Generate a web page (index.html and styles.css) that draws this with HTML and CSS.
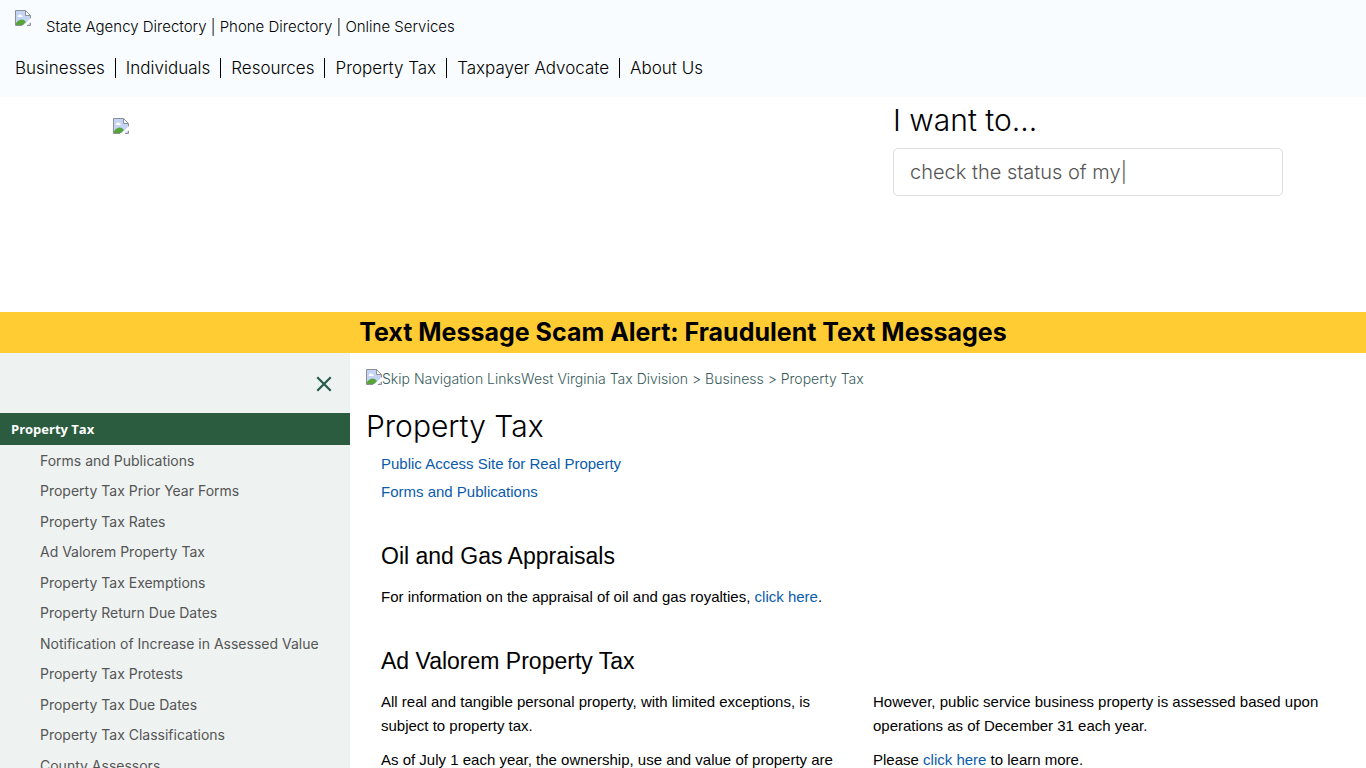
FILE: index.html
```html
<!DOCTYPE html>
<html lang="en">
<head>
<meta charset="utf-8">
<meta name="viewport" content="width=device-width, initial-scale=1">
<title>Property Tax</title>
<link rel="stylesheet" href="styles.css">
</head>
<body>
<svg class="sprite" aria-hidden="true">
  <symbol id="missing" viewBox="0 0 16 16">
    <path d="M.5.5h10l5 5v10H.5z" fill="#c3d4f5"/>
    <path d="M3 6c0-2 3-2 3-.8C8 4.700 8.500 7 7 7H3.500C2.500 7 2.300 6.200 3 6z" fill="#fff"/>
    <path d="M1 15v-2c3-4 7-5 10-1l-3 3z" fill="#57a43c"/>
    <path d="M10.500.5v5h5z" fill="#fff"/>
    <path d="M15.500 9v-3.500l-5-5H.5v15H7M10.500.5v5h5M12 15.500h3.500V13" fill="none" stroke="#8d9095"/>
    <path d="M7.500 16L16 8v3.500L11 16z" fill="#fff"/>
  </symbol>
</svg>
<header class="site-header">
  <div class="agency">
    <svg class="missing" role="img" aria-label="West Virginia"><use href="#missing"/></svg>
    <div class="agency-links"><a href="#">State Agency Directory</a> | <a href="#">Phone Directory</a> | <a href="#">Online Services</a></div>
  </div>
  <nav class="main-nav">
    <a href="#">Businesses</a><a href="#">Individuals</a><a href="#">Resources</a><a href="#">Property Tax</a><a href="#">Taxpayer Advocate</a><a href="#">About Us</a>
  </nav>
</header>
<section class="hero">
  <div class="hero-logo"><svg class="missing" role="img" aria-label="Tax Division"><use href="#missing"/></svg></div>
  <form class="search">
    <label class="search-label" for="want">I want to...</label>
    <input class="search-input" id="want" type="text" placeholder="check the status of my|">
  </form>
</section>
<a class="alert" href="#">Text Message Scam Alert: Fraudulent Text Messages</a>
<div class="layout">
  <aside class="sidebar">
    <div class="sidebar-top">
      <button class="close" type="button" aria-label="Close menu"><svg class="close-icon" viewBox="0 0 16 16"><path d="M2 2l12 12M14 2L2 14"/></svg></button>
    </div>
    <a class="sidebar-title" href="#">Property Tax</a>
    <ul class="sidebar-list">
      <li><a href="#">Forms and Publications</a></li>
      <li><a href="#">Property Tax Prior Year Forms</a></li>
      <li><a href="#">Property Tax Rates</a></li>
      <li><a href="#">Ad Valorem Property Tax</a></li>
      <li><a href="#">Property Tax Exemptions</a></li>
      <li><a href="#">Property Return Due Dates</a></li>
      <li><a href="#">Notification of Increase in Assessed Value</a></li>
      <li><a href="#">Property Tax Protests</a></li>
      <li><a href="#">Property Tax Due Dates</a></li>
      <li><a href="#">Property Tax Classifications</a></li>
      <li><a href="#">County Assessors</a></li>
    </ul>
  </aside>
  <main class="content">
    <nav class="crumbs"><a class="skip" href="#title"><svg class="missing" aria-hidden="true"><use href="#missing"/></svg>Skip Navigation Links</a><a href="#">West Virginia Tax Division</a> &gt; <a href="#">Business</a> &gt; <a href="#">Property Tax</a></nav>
    <h1 class="title" id="title">Property Tax</h1>
    <div class="block">
      <ul class="quick"><li><a href="#">Public Access Site for Real Property</a></li><li><a href="#">Forms and Publications</a></li></ul>
    </div>
    <section class="block">
      <h2 class="heading">Oil and Gas Appraisals</h2>
      <p>For information on the appraisal of oil and gas royalties, <a href="#">click here</a>.</p>
    </section>
    <section class="block">
      <h2 class="heading">Ad Valorem Property Tax</h2>
      <div class="columns">
        <div>
          <p>All real and tangible personal property, with limited exceptions, is subject to property tax.</p>
          <p>As of July 1 each year, the ownership, use and value of property are</p>
        </div>
        <div>
          <p>However, public service business property is assessed based upon operations as of December 31 each year.</p>
          <p>Please <a href="#">click here</a> to learn more.</p>
        </div>
      </div>
    </section>
  </main>
</div>
</body>
</html>
```
FILE: styles.css
```css
* { box-sizing: border-box; }
body {
  margin: 0;
  background: #fff;
  color: #000;
  font-family: "Century Gothic", Inter, sans-serif;
  font-weight: 300;
  font-size: 14px;
}
a { color: inherit; text-decoration: none; }
ul, p, h1, h2 { margin: 0; padding: 0; }
ul { list-style: none; }
.sprite { position: absolute; width: 0; height: 0; }
.missing { width: 16px; height: 16px; flex: none; }

.site-header { background: #f8fcff; padding: 10px 15px 19px; }
.agency { display: flex; gap: 15px; }
.agency-links { padding-top: 7px; font-size: 15px; line-height: 20px; white-space: pre; }
.main-nav { display: flex; flex-wrap: wrap; margin-top: 21px; font-size: 17px; line-height: 20px; }
.main-nav a { padding: 0 10px; border-left: 1px solid #000; }
.main-nav a:first-child { padding-left: 0; border-left: 0; }

.hero {
  display: grid;
  grid-template-columns: 2fr 1fr;
  max-width: 1200px;
  min-height: 215px;
  margin: 0 auto;
  padding-left: 30px;
}
.hero-logo { padding-top: 21px; }
.search { padding-top: 5px; }
.search-label { display: block; font-size: 30px; line-height: 36px; margin-bottom: 10px; }
.search-input {
  width: 100%;
  height: 48px;
  padding: 0 16px;
  border: 1px solid #dedede;
  border-radius: 5px;
  font: inherit;
  font-size: 20px;
}
.search-input::placeholder { color: #555; opacity: 1; }

.alert {
  display: block;
  background: #ffcc33;
  text-align: center;
  font-size: 25px;
  font-weight: 700;
  line-height: 41px;
}

.layout { display: flex; align-items: stretch; }
.sidebar { flex: 0 0 350px; background: #eef2f1; color: #555; }
.sidebar-top { display: flex; justify-content: flex-end; padding: 19px 14px 17px; }
.close { display: grid; place-items: center; width: 24px; height: 24px; padding: 0; border: 0; background: none; }
.close-icon { width: 18px; height: 18px; fill: none; stroke: #285b4d; stroke-width: 2; }
.sidebar-title {
  display: block;
  padding: 1px 11px 0;
  background: #2c5c3f;
  color: #fff;
  font-family: "Segoe UI", "Open Sans", sans-serif;
  font-size: 13px;
  font-weight: 700;
  line-height: 31px;
}
.sidebar-list { padding-left: 40px; font-weight: 400; line-height: 31px; }
.sidebar-list li:nth-child(even) { line-height: 30px; }

.content { flex: 1; min-width: 0; padding: 16px; }
.crumbs { display: flex; flex-wrap: wrap; color: #375b5b; line-height: 20px; white-space: pre; }
.skip { display: flex; }
.title { margin-top: 17px; font-size: 30px; font-weight: 300; line-height: 40px; }
.block { padding: 0 15px; font-family: Arial, "Liberation Sans", sans-serif; font-size: 15px; font-weight: 400; line-height: 24px; }
.block a { color: #0a5bab; }
.block p { margin-bottom: 10px; }
.quick { padding: 6px 0; }
.quick li { margin-bottom: 4px; }
.heading { padding-top: 26px; margin-bottom: 13px; font-size: 23px; font-weight: 400; line-height: 32px; }
.columns { display: grid; grid-template-columns: 1fr 1fr; gap: 30px; }
```
